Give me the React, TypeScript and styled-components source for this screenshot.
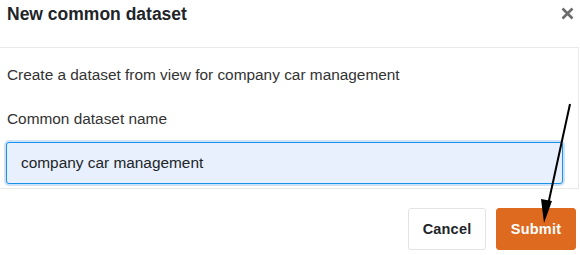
import React from 'react';
import styled, { createGlobalStyle } from 'styled-components';

const GlobalStyle = createGlobalStyle`
  html, body {
    margin: 0;
    padding: 0;
    background: #ffffff;
  }
  body {
    font-family: "Liberation Sans", Arial, sans-serif;
    color: #333333;
  }
`;

const Dialog = styled.div`
  position: relative;
  width: 580px;
  height: 255px;
  overflow: hidden;
  display: flex;
  flex-direction: column;
`;

const Header = styled.header`
  height: 47px;
  display: flex;
  justify-content: space-between;
  align-items: flex-start;
  padding: 4px 4px 0 7px;
  box-sizing: border-box;
`;

const Title = styled.h2`
  margin: 0;
  font-size: 17.5px;
  line-height: 21px;
  font-weight: 700;
  color: #212529;
`;

const CloseButton = styled.button`
  border: 0;
  background: none;
  padding: 3px 2px;
  margin: 0;
  cursor: pointer;
  display: flex;
`;

// Body is cut off at the left edge of the shot, so no left border
const Body = styled.section`
  border: 1px solid #e9e9e9;
  border-left: 0;
  margin-right: 1px;
  padding: 16px 15px 4px 7px;
  display: flex;
  flex-direction: column;
`;

const Description = styled.p`
  margin: 0;
  font-size: 15.4px;
  line-height: 22px;
`;

const Label = styled.label`
  margin-top: 22px;
  font-size: 15.4px;
  line-height: 22px;
`;

const NameInput = styled.input`
  margin: 12px 0 0 -1px;
  height: 42px;
  box-sizing: border-box;
  border: 1px solid #1791ea;
  border-radius: 3px;
  background: #e7f0fc;
  box-shadow: 0 0 0 2px #cfe2f7;
  padding: 0 14px;
  font-family: inherit;
  font-size: 15.4px;
  color: #212529;
  outline: none;
`;

const Footer = styled.footer`
  flex: 1;
  display: flex;
  justify-content: flex-end;
  align-items: flex-start;
  gap: 10px;
  padding: 19px 4px 0 0;
`;

const Button = styled.button<{ $primary?: boolean }>`
  height: 42px;
  padding: 0 13px;
  border-radius: 3px;
  font-family: inherit;
  font-size: 14.5px;
  font-weight: 700;
  letter-spacing: 0.2px;
  cursor: pointer;
  border: 1px solid ${(p) => (p.$primary ? '#dd6a1f' : '#e3e3e3')};
  background: ${(p) => (p.$primary ? '#dd6a1f' : '#ffffff')};
  color: ${(p) => (p.$primary ? '#ffffff' : '#212529')};
`;

// Annotation arrow drawn over the dialog
const Annotation = styled.svg`
  position: absolute;
  inset: 0;
  pointer-events: none;
`;

export default function App() {
  return (
    <>
      <GlobalStyle />
      <Dialog>
        <Header>
          <Title>New common dataset</Title>
          <CloseButton aria-label="Close">
            <svg width="13" height="13" viewBox="0 0 13 13">
              <path d="M1.5 1.5 L11.5 11.5 M11.5 1.5 L1.5 11.5" stroke="#6b6b6b" strokeWidth="2.6" />
            </svg>
          </CloseButton>
        </Header>
        <Body>
          <Description>Create a dataset from view for company car management</Description>
          <Label htmlFor="dataset-name">Common dataset name</Label>
          <NameInput id="dataset-name" defaultValue="company car management" />
        </Body>
        <Footer>
          <Button style={{ width: 78 }}>Cancel</Button>
          <Button $primary style={{ width: 80 }}>Submit</Button>
        </Footer>
        <Annotation width="580" height="255" viewBox="0 0 580 255">
          <line x1="570" y1="104" x2="548" y2="205" stroke="#000" strokeWidth="2" />
          <polygon points="544,223 541,199 552,201" fill="#000" />
        </Annotation>
      </Dialog>
    </>
  );
}
